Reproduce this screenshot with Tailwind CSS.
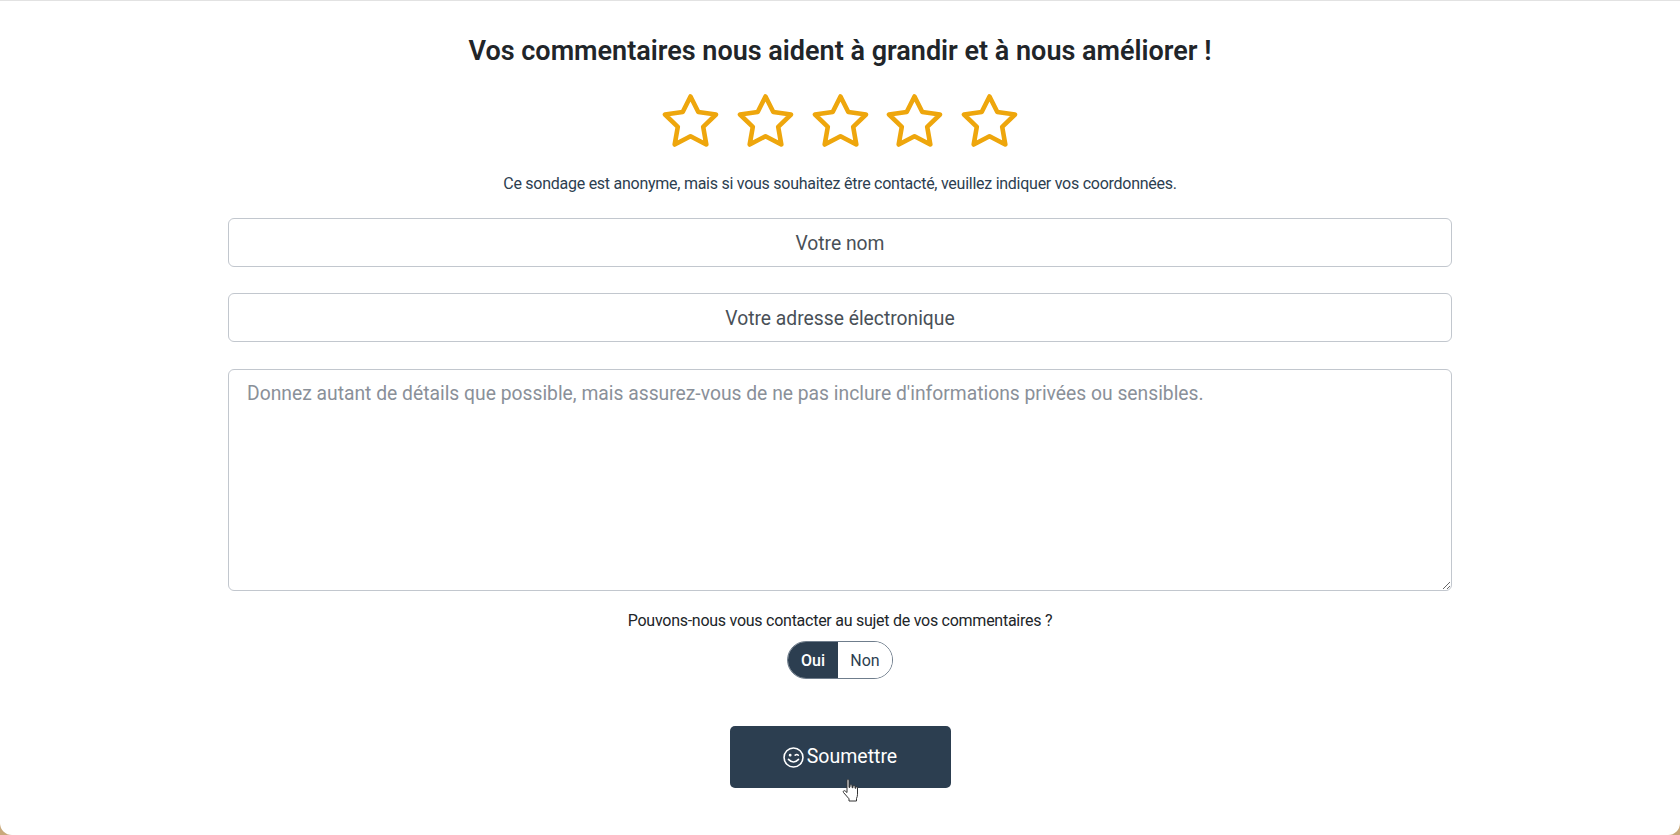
<!DOCTYPE html>
<html lang="fr">
<head>
    <meta charset="UTF-8">
    <meta name="viewport" content="width=device-width, initial-scale=1.0">
    <title>Commentaires</title>
    <script src="https://cdn.jsdelivr.net/npm/@tailwindcss/browser@4"></script>
</head>
<body class="bg-[#c9a97c] font-['Roboto',sans-serif] overflow-hidden">
    <main class="relative w-[1680px] h-[835px] bg-white rounded-b-[12px] border-t border-[#e2e2e2] flex flex-col items-center">
        <h1 class="mt-[33px] h-[34px] text-[27px] leading-[34px] font-semibold text-[#212529]">Vos commentaires nous aident à grandir et à nous améliorer !</h1>

        <div class="mt-[25px] flex gap-[17.6px]">
            <svg class="w-[57px] h-[55px]" viewBox="0 0 57 55"><polygon points="28.500,3.500 36.300,19 54,21.500 41.200,33.800 44.300,51.500 28.500,43.200 12.700,51.500 15.800,33.800 3,21.500 20.700,19" fill="none" stroke="#eea60c" stroke-width="4.600" stroke-linejoin="round"/></svg>
            <svg class="w-[57px] h-[55px]" viewBox="0 0 57 55"><polygon points="28.500,3.500 36.300,19 54,21.500 41.200,33.800 44.300,51.500 28.500,43.200 12.700,51.500 15.800,33.800 3,21.500 20.700,19" fill="none" stroke="#eea60c" stroke-width="4.600" stroke-linejoin="round"/></svg>
            <svg class="w-[57px] h-[55px]" viewBox="0 0 57 55"><polygon points="28.500,3.500 36.300,19 54,21.500 41.200,33.800 44.300,51.500 28.500,43.200 12.700,51.500 15.800,33.800 3,21.500 20.700,19" fill="none" stroke="#eea60c" stroke-width="4.600" stroke-linejoin="round"/></svg>
            <svg class="w-[57px] h-[55px]" viewBox="0 0 57 55"><polygon points="28.500,3.500 36.300,19 54,21.500 41.200,33.800 44.300,51.500 28.500,43.200 12.700,51.500 15.800,33.800 3,21.500 20.700,19" fill="none" stroke="#eea60c" stroke-width="4.600" stroke-linejoin="round"/></svg>
            <svg class="w-[57px] h-[55px]" viewBox="0 0 57 55"><polygon points="28.500,3.500 36.300,19 54,21.500 41.200,33.800 44.300,51.500 28.500,43.200 12.700,51.500 15.800,33.800 3,21.500 20.700,19" fill="none" stroke="#eea60c" stroke-width="4.600" stroke-linejoin="round"/></svg>
        </div>

        <p class="mt-[24px] h-[24px] text-[16px] tracking-[-0.26px] leading-[24px] text-[#2c3e50]">Ce sondage est anonyme, mais si vous souhaitez être contacté, veuillez indiquer vos coordonnées.</p>

        <div class="mt-[22px] w-[1224px] flex flex-col">
            <input type="text" placeholder="Votre nom" class="w-full h-[49px] pt-[2px] border border-[#c2c7ce] rounded-[6px] bg-white text-center text-[19.3px] placeholder:text-[#495057] outline-none">
            <input type="email" placeholder="Votre adresse électronique" class="mt-[26px] w-full h-[49px] pt-[2px] border border-[#c2c7ce] rounded-[6px] bg-white text-center text-[19.3px] placeholder:text-[#495057] outline-none">
            <textarea placeholder="Donnez autant de détails que possible, mais assurez-vous de ne pas inclure d'informations privées ou sensibles." class="mt-[27px] w-full h-[222px] block border border-[#c2c7ce] rounded-[6px] bg-white px-[18px] pt-[10px] pb-[8px] text-[19.3px] leading-[28px] placeholder:text-[#8a9099] outline-none"></textarea>
        </div>

        <p class="mt-[18px] h-[24px] text-[16px] tracking-[-0.26px] leading-[24px] text-[#212529]">Pouvons-nous vous contacter au sujet de vos commentaires ?</p>

        <div class="mt-[8px] flex w-[106px] h-[38px] rounded-full border border-[#6f7d8c] overflow-hidden text-[16px]">
            <span class="w-[50px] pt-[1px] flex items-center justify-center bg-[#2c3e50] text-white font-medium">Oui</span>
            <span class="flex-1 pt-[1px] flex items-center justify-center bg-white text-[#2c3e50]">Non</span>
        </div>

        <button class="mt-[47px] w-[221px] h-[62px] rounded-[5px] bg-[#2c3e50] text-white text-[19.5px] flex items-center justify-center gap-[3px]">
            <svg class="w-[21px] h-[21px]" viewBox="0 0 20 20" fill="none" stroke="white" stroke-width="1.500" stroke-linecap="round">
                <circle cx="10" cy="10" r="9"/>
                <circle cx="6.800" cy="7.800" r="0.600" fill="white"/>
                <path d="M11.600 7.800q1.600 -1.400 3 0"/>
                <path d="M5.200 11.800q4.800 5 9.600 0"/>
            </svg>
            Soumettre
        </button>

        <!-- cursor -->
        <svg class="absolute left-[842px] top-[778px] w-[17px] h-[23px]" viewBox="0 0 17 23" fill="white" stroke="#333" stroke-width="1" stroke-linejoin="round">
            <path d="M5 1.500c0-1.200 2-1.200 2 0v7l1-.3V6.600c0-1 2-1 2 0v2l1 .1V7.400c0-1 2-1 2 0v1.800l.7.2V8.600c0-.9 1.800-.9 1.800.2v6.500c0 1.500-.4 3-1 4.200v2.500H7v-2.200L1.500 13.500c-.9-1.200.6-2.500 1.700-1.500L5 13.500z"/>
        </svg>
    </main>
</body>
</html>
